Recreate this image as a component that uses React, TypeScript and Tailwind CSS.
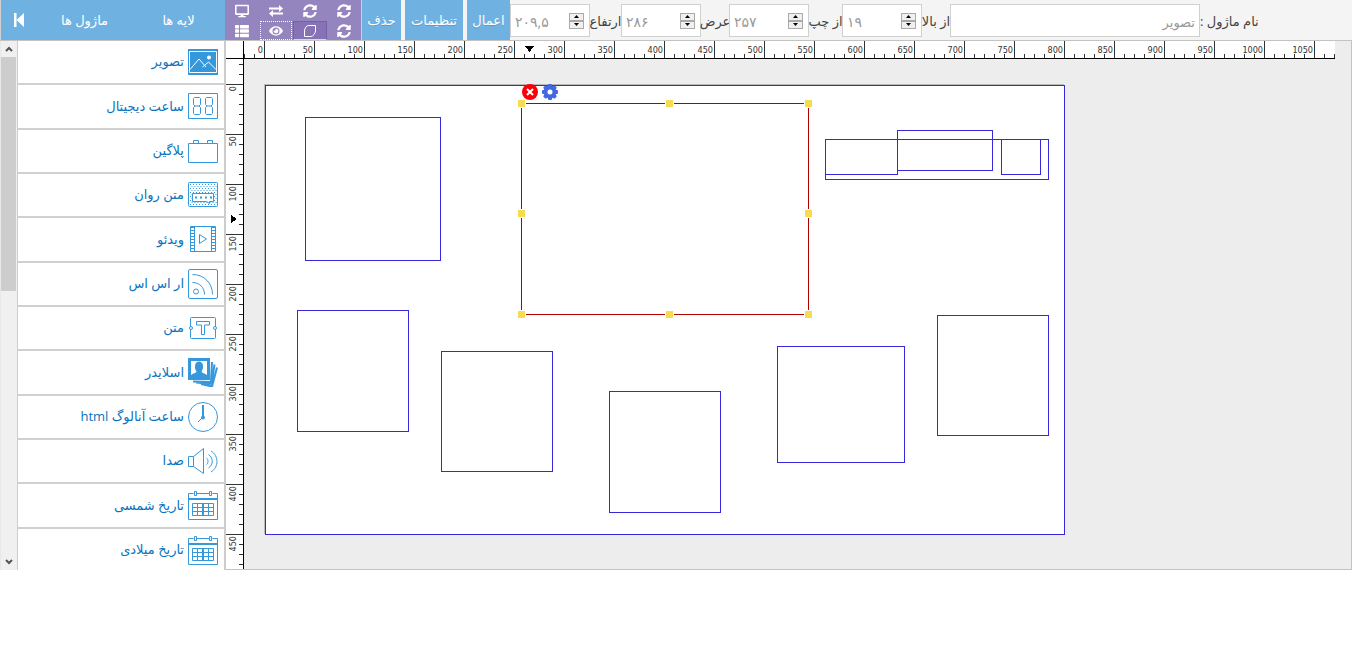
import React from 'react';
import { FaDesktop, FaEye, FaSyncAlt, FaThList } from 'react-icons/fa';

interface ModuleItem {
  label: string;
  icon: React.ReactNode;
}

interface Box {
  x: number;
  y: number;
  w: number;
  h: number;
}

const calendarIcon = (
  <>
    <path d="M.5 3.500h5M8.500 3.500h13M24.500 3.500h5M.5 3.500v26h29v-26" />
    <path d="M1 9h28" strokeWidth="2" />
    <path d="M6.500 1.500h2v4h-2zM21.500 1.500h2v4h-2z" fill="#fff" />
    <path d="M4.500 13.500h21v12h-21zM4.500 17.500h21M4.500 21.500h21M9.500 13.500v12M20.500 13.500v12" />
    <path d="M15 13v13" strokeWidth="2" />
  </>
);

const modules: ModuleItem[] = [
  {
    label: 'تصویر',
    icon: (
      <>
        <path d="M0 2h30v26H0z" fill="#3598dc" stroke="none" />
        <path d="M1.500 4.500h27v21h-27z" stroke="#fff" />
        <path d="M2 22.500 11 12l7 8M14.500 20l6-5 7.500 7.500" stroke="#fff" />
        <circle cx="21" cy="10.500" r="2" fill="#fff" stroke="none" />
      </>
    ),
  },
  {
    label: 'ساعت دیجیتال',
    icon: (
      <>
        <path d="M.5 2.500h29v25H.5z" />
        <path d="M6.500 6.500h5l1 1v6l-1.500 1.500 1.500 1.500v6l-1 1h-5l-1-1v-6L7 15l-1.500-1.500v-6zM18.500 6.500h5l1 1v6l-1.500 1.500 1.500 1.500v6l-1 1h-5l-1-1v-6L19 15l-1.500-1.500v-6z" />
        <path d="M7 15h4M19 15h4" />
      </>
    ),
  },
  {
    label: 'پلاگین',
    icon: <path d="M.5 7.500h29v19H.5zM5.500 7.500v-3h5v3M19.500 7.500v-3h5v3" />,
  },
  {
    label: 'متن روان',
    icon: (
      <>
        <rect x=".5" y="2.500" width="29" height="24" rx="1" />
        <path d="M2 4.500h26M2 8.500h26M2 12.500h26M2 16.500h26M2 20.500h26M2 24.500h26" strokeDasharray="1 2" />
        <path d="M3.500 6.500h25M3.500 10.500h25M3.500 14.500h25M3.500 18.500h25M3.500 22.500h25" strokeDasharray="1 2" />
        <path d="M4.500 13.500h21v8h-4v2l-3-2h-14z" fill="#fff" />
        <path d="M7 17.500h17" strokeDasharray="2 3" strokeWidth="2" />
      </>
    ),
  },
  {
    label: 'ویدئو',
    icon: (
      <>
        <path d="M2.500 2.500h25v25h-25zM6.500 2.500v25M23.500 2.500v25" />
        <path d="M4.500 3v24M25.500 3v24" strokeWidth="3" strokeDasharray="1 2" />
        <path d="M11.500 10.500v9l7-4.500z" />
      </>
    ),
  },
  {
    label: 'ار اس اس',
    icon: (
      <>
        <rect x=".5" y=".5" width="29" height="29" rx="1.500" />
        <path d="M4.500 5.500C16 5.500 24.500 14 24.500 25.500M4.500 13.500c7 0 12 5 12 12" />
        <circle cx="8" cy="22.500" r="2.500" />
      </>
    ),
  },
  {
    label: 'متن',
    icon: (
      <>
        <rect x="2.500" y="4.500" width="25" height="21" rx="1" />
        <circle cx="3" cy="15" r="1.500" fill="#fff" />
        <circle cx="27" cy="15" r="1.500" fill="#fff" />
        <path d="M8.500 8.500h13v3.500h-5v9.500h-3V12h-5z" />
      </>
    ),
  },
  {
    label: 'اسلایدر',
    icon: (
      <>
        <path d="M0 1h22v22H0z" fill="#3598dc" stroke="none" />
        <path d="M3 4h16v14H3z" fill="#fff" stroke="none" />
        <path d="M3 19c0-3 5-2 5.500-4.500C7 12.500 7 11 7 9c0-6 8-6 8 0 0 2 0 3.500-1.500 5.500C14 17 19 16 19 19z" fill="#3598dc" stroke="none" />
        <path d="M24 5l-1 20L5 24.500M26.500 7.500l-3 19.500L8 25.500M29 10.500 24 29.500 13 27" strokeWidth="2" />
      </>
    ),
  },
  {
    label: 'ساعت آنالوگ html',
    icon: (
      <>
        <circle cx="15" cy="15" r="14.500" />
        <path d="M15 3v12" strokeWidth="2" />
        <path d="M15 15l-5 5" />
        <circle cx="15" cy="15.500" r="1.500" fill="#3598dc" />
      </>
    ),
  },
  {
    label: 'صدا',
    icon: (
      <>
        <path d="M.5 10.500h5v10h-5zM5.500 10.500 15.500 2.500v25l-10-7" />
        <path d="M18.500 12c2 1.500 2 5 0 6.500M20.500 8.500c5 3.500 5 10 0 13.500M23 5c8 5 8 16 0 21" />
      </>
    ),
  },
  { label: 'تاریخ شمسی', icon: calendarIcon },
  { label: 'تاریخ میلادی', icon: calendarIcon },
];

// outlines of the modules, in stage pixels
const boxes: Box[] = [
  { x: 39, y: 31, w: 136, h: 144 },
  { x: 31, y: 224, w: 112, h: 122 },
  { x: 175, y: 265, w: 112, h: 121 },
  { x: 343, y: 305, w: 112, h: 122 },
  { x: 511, y: 260, w: 128, h: 117 },
  { x: 671, y: 229, w: 112, h: 121 },
  { x: 559, y: 53, w: 224, h: 41 },
  { x: 559, y: 53, w: 73, h: 36 },
  { x: 631, y: 44, w: 96, h: 41 },
  { x: 735, y: 53, w: 40, h: 36 },
];

const selected: Box = { x: 255, y: 17, w: 288, h: 212 };

const handles = [
  [0, 0], [148, 0], [287, 0],
  [0, 110], [287, 110],
  [0, 211], [148, 211], [287, 211],
];

const range = (n: number) => Array.from({ length: n }, (_, i) => i);

function HorizontalRuler() {
  // zero sits 20px in, one tick every 10px
  return (
    <svg width="1091" height="18" className="block bg-white font-['DejaVu_Sans_Condensed','DejaVu_Sans',sans-serif] text-[9px]" shapeRendering="crispEdges">
      {range(110).map((i) => {
        const major = i >= 2 && (i - 2) % 5 === 0;
        return <rect key={i} x={i * 10} y={major ? 0 : 13} width="1" height={major ? 17 : 4} fill="#333" />;
      })}
      {range(22).map((i) => (
        <text key={i} x={19 + i * 50} y="12" textAnchor="end" fill="#333">
          {i * 50}
        </text>
      ))}
      <path d="M281 5h9l-4.500 6z" fill="#000" />
      <rect y="17" width="1091" height="1" fill="#000" />
    </svg>
  );
}

function VerticalRuler() {
  return (
    <svg width="18" height="510" className="block bg-white font-['DejaVu_Sans_Condensed','DejaVu_Sans',sans-serif] text-[9px]" shapeRendering="crispEdges">
      {range(51).map((i) => {
        const major = i >= 2 && (i - 2) % 5 === 0;
        return <rect key={i} x={major ? 0 : 13} y={5 + i * 10} width={major ? 17 : 4} height="1" fill="#333" />;
      })}
      {range(10).map((i) => (
        <text key={i} transform={`translate(10 ${27 + i * 50}) rotate(-90)`} textAnchor="end" fill="#333">
          {i * 50}
        </text>
      ))}
      <path d="M5 156v8l6-4z" fill="#000" />
      <rect x="17" width="1" height="510" fill="#000" />
    </svg>
  );
}

function Spinner({ name }: { name: string }) {
  const button = 'flex h-2 w-[15px] items-center justify-center border border-[#aaa] bg-[#f0f0f0]';
  return (
    <span className="mr-[5px] flex shrink-0 flex-col">
      <button type="button" aria-label={`${name} +`} className={button}>
        <svg width="5" height="3"><path d="M0 3h5L2.500 0z" /></svg>
      </button>
      <button type="button" aria-label={`${name} -`} className={button}>
        <svg width="5" height="3"><path d="M0 0h5L2.500 3z" /></svg>
      </button>
    </span>
  );
}

function NumberField({ id, label, value, labelClass }: { id: string; label: string; value: string; labelClass: string }) {
  return (
    <div className="flex shrink-0 items-center">
      <div className="flex h-[33px] w-20 items-center border border-[#d0d0d0] bg-white">
        <input id={id} defaultValue={value} className="w-full min-w-0 flex-1 bg-transparent pt-[2px] pl-1 text-sm text-[#999] outline-none" />
        <Spinner name={label} />
      </div>
      <label htmlFor={id} dir="rtl" className={`flex justify-center pt-[2px] whitespace-nowrap text-[13px] text-[#444] ${labelClass}`}>
        {label}
      </label>
    </div>
  );
}

function GearIcon() {
  return (
    <svg width="16" height="16" viewBox="0 0 16 16" fill="#4169e1">
      {range(8).map((i) => (
        <rect key={i} x="6" y="0" width="4" height="4" rx="1" transform={`rotate(${i * 45} 8 8)`} />
      ))}
      <circle cx="8" cy="8" r="4.500" fill="none" stroke="#4169e1" strokeWidth="4" />
    </svg>
  );
}

function ToolGrid() {
  const cell = 'flex items-center justify-center';
  return (
    <div className="grid h-10 w-[136px] shrink-0 grid-cols-4 grid-rows-[21px_19px] bg-[#9585bf] text-sm text-white">
      <button type="button" aria-label="نمایش" className={cell}><FaDesktop /></button>
      <button type="button" aria-label="جابجایی" className={cell}>
        <svg width="14" height="12" viewBox="0 0 14 12" fill="#fff">
          <path d="M0 2.500h10V0l4 3.500L10 7V4.500H0zM14 7.500H4V5L0 8.500 4 12V9.500h10z" />
        </svg>
      </button>
      <button type="button" aria-label="بازنشانی" className={cell}><FaSyncAlt /></button>
      <button type="button" aria-label="بارگذاری" className={cell}><FaSyncAlt /></button>
      <button type="button" aria-label="فهرست" className={cell}><FaThList /></button>
      <button type="button" aria-label="پیش نمایش" className={`${cell} mx-px border border-dotted border-white`}><FaEye /></button>
      <button type="button" aria-label="شکل" className={`${cell} border border-[#7560ac] border-b-[#e8dca0] bg-[#8672b5]`}>
        <svg width="12" height="12" viewBox="0 0 12 12" fill="none" stroke="#fff">
          <path d="M4.500.5h7V6c0 2-2.500 5.500-4.500 5.500H.5V6C.5 3.500 2.500.5 4.500.5z" />
        </svg>
      </button>
      <button type="button" aria-label="تازه سازی" className={cell}><FaSyncAlt /></button>
    </div>
  );
}

function Toolbar() {
  const action = 'h-10 shrink-0 bg-[#6fb2e2] pt-[2px] text-center text-[13px] whitespace-nowrap text-white text-shadow-2xs';
  return (
    <header className="flex h-[41px] items-start overflow-hidden border-b border-[#c3c3c3] bg-[#f4f4f4]">
      <div className="flex h-10 w-[225px] shrink-0 items-center border-l border-[#d0d0d0] bg-[#6fb2e2] text-[13px] text-white text-shadow-2xs">
        <button type="button" aria-label="بستن" className="flex w-9 justify-center">
          <svg width="10" height="14" viewBox="0 0 10 14" fill="#fff"><path d="M0 0h2.500v14H0zM10 0v14L2.500 7z" /></svg>
        </button>
        <button type="button" dir="rtl" className="w-[95px] pt-[2px]">ماژول ها</button>
        <button type="button" dir="rtl" className="w-[93px] pt-[2px]">لایه ها</button>
      </div>
      <ToolGrid />
      <div className="flex shrink-0 gap-1 border-l border-[#d0d0d0]">
        <button type="button" className={`${action} w-[39px]`}>حذف</button>
        <button type="button" className={`${action} w-[58px]`}>تنظیمات</button>
        <button type="button" className={`${action} w-[43px]`}>اعمال</button>
      </div>
      <form className="flex h-10 items-center pt-px">
        <NumberField id="height" label="ارتفاع" value="۲۰۹,۵" labelClass="w-[31px]" />
        <NumberField id="width" label="عرض" value="۲۸۶" labelClass="w-7" />
        <NumberField id="left" label="از چپ" value="۲۵۷" labelClass="w-[33px]" />
        <NumberField id="top" label="از بالا" value="۱۹" labelClass="w-7" />
        <input
          id="name"
          dir="rtl"
          defaultValue="تصویر"
          className="h-[33px] w-[250px] shrink-0 border border-[#d0d0d0] bg-white px-1 pt-[2px] text-[13px] text-[#999] outline-none"
        />
        <label htmlFor="name" dir="rtl" className="pt-[2px] whitespace-nowrap text-[13px] text-[#444]">نام ماژول :</label>
      </form>
    </header>
  );
}

function Scrollbar() {
  return (
    <div className="flex w-4 shrink-0 flex-col bg-[#f0f0f0]">
      <button type="button" aria-label="بالا" className="flex h-4 items-center justify-center">
        <svg width="8" height="6" fill="none" stroke="#555" strokeWidth="2"><path d="M1 5l3-3 3 3" /></svg>
      </button>
      <div className="mr-px h-[234px] bg-[#cdcdcd]" />
      <button type="button" aria-label="پایین" className="mt-auto flex h-4 items-center justify-center">
        <svg width="8" height="6" fill="none" stroke="#555" strokeWidth="2"><path d="M1 1l3 3 3-3" /></svg>
      </button>
    </div>
  );
}

function Sidebar() {
  return (
    <aside className="flex h-[529px] w-[226px] shrink-0 overflow-hidden border-l border-[#e8e8e8]">
      <Scrollbar />
      <ul dir="rtl" className="flex h-[532px] flex-1 flex-col border-r-2 border-l border-[#ccc] bg-white">
        {modules.map((item) => (
          <li key={item.label} className="flex-1 border-b-2 border-[#d0d0d0]">
            <a href="#" className="flex h-full items-center gap-1 pr-[6px] text-[13px] whitespace-nowrap text-[#0a73bd]">
              <svg width="30" height="30" viewBox="0 0 30 30" fill="none" stroke="#3598dc" className="shrink-0">
                {item.icon}
              </svg>
              {item.label}
            </a>
          </li>
        ))}
      </ul>
    </aside>
  );
}

function Stage() {
  return (
    <div className="relative h-[450px] w-[800px] border border-[#3628dc] bg-white shadow-[-1px_-1px_0_#bbb]">
      {boxes.map((b, i) => (
        <div
          key={i}
          className="absolute border border-[#3628dc]"
          style={{ left: b.x, top: b.y, width: b.w, height: b.h }}
        />
      ))}
      <div
        className="absolute border border-[#b00000]"
        style={{ left: selected.x, top: selected.y, width: selected.w, height: selected.h }}
      />
      {handles.map(([x, y]) => (
        <span
          key={`${x}-${y}`}
          className="absolute size-[9px] border border-white bg-[#f5dc50]"
          style={{ left: selected.x + x - 4, top: selected.y + y - 4 }}
        />
      ))}
      <div className="absolute -top-[2px] left-[256px] flex gap-1">
        <button type="button" aria-label="حذف" className="flex size-4 items-center justify-center rounded-full bg-[#fb0007]">
          <svg width="8" height="8" stroke="#fff" strokeWidth="2"><path d="M1 1l6 6M7 1 1 7" /></svg>
        </button>
        <button type="button" aria-label="تنظیمات"><GearIcon /></button>
      </div>
    </div>
  );
}

export default function App() {
  return (
    <div dir="ltr" className="min-h-screen bg-white pr-[14px] font-['Open_Sans','DejaVu_Sans',sans-serif]">
      <Toolbar />
      <div className="flex">
        <Sidebar />
        <main className="grid min-w-0 flex-1 grid-cols-[18px_1fr] grid-rows-[18px_1fr] overflow-hidden border-r border-b border-[#c3c3c3] bg-[#ededed]">
          <div className="border-r border-b border-black bg-white" />
          <HorizontalRuler />
          <VerticalRuler />
          <div className="pt-[26px] pl-[21px]">
            <Stage />
          </div>
        </main>
      </div>
    </div>
  );
}
